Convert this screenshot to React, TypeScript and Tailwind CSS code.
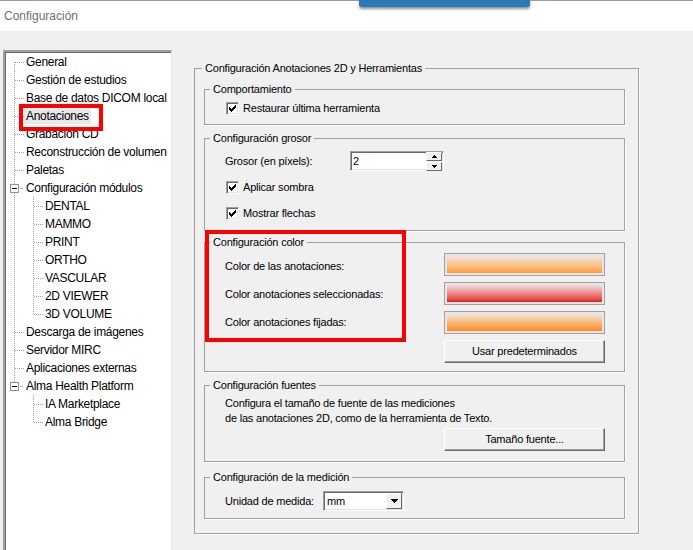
import React from 'react';

const DOT = '#a0a0a0';

function hDots(x1: number, x2: number, y: number, k: string) {
  const r: React.ReactElement[] = [];
  for (let x = x1; x <= x2; x += 2) r.push(<rect key={k + 'h' + x} x={x} y={y} width={1} height={1} fill={DOT} />);
  return r;
}
function vDots(x: number, y1: number, y2: number, k: string) {
  const r: React.ReactElement[] = [];
  for (let y = y1; y <= y2; y += 2) r.push(<rect key={k + 'v' + y} x={x} y={y} width={1} height={1} fill={DOT} />);
  return r;
}

type Row = {
  t: string;
  lvl: 0 | 1;
  first?: boolean;
  exp?: boolean;
  lastRoot?: boolean;
  lastChild?: boolean;
  rootCont?: boolean;
  sel?: boolean;
};

const rows: Row[] = [
  { t: 'General', lvl: 0, first: true },
  { t: 'Gestión de estudios', lvl: 0 },
  { t: 'Base de datos DICOM local', lvl: 0 },
  { t: 'Anotaciones', lvl: 0, sel: true },
  { t: 'Grabación CD', lvl: 0 },
  { t: 'Reconstrucción de volumen', lvl: 0 },
  { t: 'Paletas', lvl: 0 },
  { t: 'Configuración módulos', lvl: 0, exp: true },
  { t: 'DENTAL', lvl: 1, rootCont: true },
  { t: 'MAMMO', lvl: 1, rootCont: true },
  { t: 'PRINT', lvl: 1, rootCont: true },
  { t: 'ORTHO', lvl: 1, rootCont: true },
  { t: 'VASCULAR', lvl: 1, rootCont: true },
  { t: '2D VIEWER', lvl: 1, rootCont: true },
  { t: '3D VOLUME', lvl: 1, rootCont: true, lastChild: true },
  { t: 'Descarga de imágenes', lvl: 0 },
  { t: 'Servidor MIRC', lvl: 0 },
  { t: 'Aplicaciones externas', lvl: 0 },
  { t: 'Alma Health Platform', lvl: 0, exp: true, lastRoot: true },
  { t: 'IA Marketplace', lvl: 1 },
  { t: 'Alma Bridge', lvl: 1, lastChild: true },
];

function TreeLines({ r, i }: { r: Row; i: number }) {
  const k = 'r' + i;
  const L = 9;
  const w = r.lvl === 0 ? 19 : 38;
  const els: React.ReactElement[] = [];
  if (r.lvl === 0) {
    if (r.exp) {
      if (!r.first) els.push(...vDots(L, 0, 4, k + 'a'));
      if (!r.lastRoot) els.push(...vDots(L, 14, 17, k + 'b'));
      els.push(...hDots(15, 18, 9, k));
      els.push(<rect key={k + 'box'} x={5.5} y={5.5} width={8} height={8} fill="#fff" stroke="#919191" strokeWidth={1} />);
      els.push(<rect key={k + 'min'} x={7} y={9} width={5} height={1} fill="#000" />);
    } else {
      els.push(...vDots(L, r.first ? 9 : 0, r.lastRoot ? 9 : 17, k));
      els.push(...hDots(L + 1, 18, 9, k));
    }
  } else {
    if (r.rootCont) els.push(...vDots(L, 0, 17, k + 'root'));
    els.push(...vDots(28, 0, r.lastChild ? 9 : 17, k + 'c'));
    els.push(...hDots(29, 37, 9, k + 'c'));
  }
  return (
    <svg width={w} height={18} className="shrink-0" shapeRendering="crispEdges">
      {els}
    </svg>
  );
}

function Checkbox({ label }: { label: string }) {
  const starts = [5, 6, 7, 6, 5, 4, 3];
  return (
    <div className="flex items-center h-[13px] ml-[21px] gap-[4px]">
      <div className="w-[13px] h-[13px] shrink-0 bg-white border border-t-[#a0a0a0] border-l-[#a0a0a0] border-b-white border-r-white shadow-[inset_1px_1px_0_#696969,inset_-1px_-1px_0_#e3e3e3]">
        <svg width={11} height={11} className="block" shapeRendering="crispEdges">
          {starts.map((s, i) => (
            <rect key={i} x={i + 2} y={s - 1} width={1} height={3} fill="#000" />
          ))}
        </svg>
      </div>
      <span className="text-[11px] leading-[13px] text-black whitespace-nowrap">{label}</span>
    </div>
  );
}

function Btn({ label, w }: { label: string; w: string }) {
  return (
    <div
      className={`${w} h-[23px] flex items-center justify-center bg-[#f0f0f0] border border-t-white border-l-white border-b-[#696969] border-r-[#696969] shadow-[inset_-1px_-1px_0_#a0a0a0] text-[11px] text-black whitespace-nowrap`}
    >
      {label}
    </div>
  );
}

function Swatch({ g }: { g: string }) {
  return (
    <div className="w-[161px] h-[23px] border border-[#a0a0a0] bg-[#e6e6e6] p-[2px]">
      <div className={`h-full ${g}`} />
    </div>
  );
}

function SmallBtn({ down }: { down?: boolean }) {
  return (
    <div className="w-[16px] h-[9px] bg-[#f0f0f0] border border-t-white border-l-white border-b-[#696969] border-r-[#696969] flex items-center justify-center">
      <svg width={5} height={3} className="block" shapeRendering="crispEdges">
        {down ? (
          <>
            <rect x={0} y={0} width={5} height={1} fill="#000" />
            <rect x={1} y={1} width={3} height={1} fill="#000" />
            <rect x={2} y={2} width={1} height={1} fill="#000" />
          </>
        ) : (
          <>
            <rect x={2} y={0} width={1} height={1} fill="#000" />
            <rect x={1} y={1} width={3} height={1} fill="#000" />
            <rect x={0} y={2} width={5} height={1} fill="#000" />
          </>
        )}
      </svg>
    </div>
  );
}

const sunken =
  'bg-white border border-t-[#a0a0a0] border-l-[#a0a0a0] border-b-white border-r-white shadow-[inset_1px_1px_0_#696969,inset_-1px_-1px_0_#e3e3e3]';

export default function App() {
  return (
    <div className="w-[693px] h-[550px] bg-[#f0f0f0] overflow-hidden relative font-['Liberation_Sans',Arial,sans-serif] text-black">
      <div className="h-px bg-[#9c9c9c]" />
      <div className="h-[30px] bg-white flex items-center pl-[4px] text-[12px] text-[#707070]">Configuración</div>
      <div className="absolute left-[359px] top-0 w-[171px] h-[7px] bg-[#2b79b5] rounded-b-[3px] shadow-[0_2px_3px_rgba(0,0,0,0.45)]" />

      <div className="flex">
        {/* Tree panel */}
        <div className="ml-[3px] mt-[19px] w-[169px] h-[520px] bg-white border-t-2 border-l-2 border-r border-t-[#a0a0a0] border-l-[#a0a0a0] border-r-[#e3e3e3] shadow-[inset_1px_1px_0_#696969] overflow-hidden shrink-0">
          <div className="flex flex-col pt-[1px]">
            {rows.map((r, i) => (
              <div key={i} className="flex items-center h-[18px] whitespace-nowrap">
                <TreeLines r={r} i={i} />
                <span className={`px-[2px] text-[12px] leading-[15px] tracking-[-0.3px] ${r.sel ? 'bg-[#e8e8e8]' : ''}`}>{r.t}</span>
              </div>
            ))}
          </div>
        </div>

        {/* Right content */}
        <fieldset className="ml-[22px] mt-[31px] w-[445px] h-[472px] border border-[#a0a0a0] shadow-[1px_1px_0_#fff] p-0 m-0 min-w-0 tracking-[-0.2px]">
          <legend className="ml-[7px] px-[3px] text-[11px] leading-[13px]">Configuración Anotaciones 2D y Herramientas</legend>

          <fieldset className="ml-[9px] mt-[8px] w-[421px] h-[42px] border border-[#a0a0a0] shadow-[1px_1px_0_#fff] p-0 m-0 min-w-0">
            <legend className="ml-[5px] px-[3px] text-[11px] leading-[13px]">Comportamiento</legend>
            <div className="mt-[6px]">
              <Checkbox label="Restaurar última herramienta" />
            </div>
          </fieldset>

          <fieldset className="ml-[9px] mt-[7px] w-[421px] h-[99px] border border-[#a0a0a0] shadow-[1px_1px_0_#fff] p-0 m-0 min-w-0">
            <legend className="ml-[5px] px-[3px] text-[11px] leading-[13px]">Configuración grosor</legend>
            <div className="mt-[6px] flex items-center ml-[20px]">
              <span className="w-[125px] text-[11px] leading-[13px]">Grosor (en píxels):</span>
              <div className={`w-[94px] h-[20px] ${sunken} flex items-center justify-between pl-[2px] pr-[1px]`}>
                <span className="text-[11px] leading-[13px]">2</span>
                <div className="flex flex-col gap-[1px]">
                  <SmallBtn />
                  <SmallBtn down />
                </div>
              </div>
            </div>
            <div className="mt-[10px]">
              <Checkbox label="Aplicar sombra" />
            </div>
            <div className="mt-[13px]">
              <Checkbox label="Mostrar flechas" />
            </div>
          </fieldset>

          <fieldset className="ml-[9px] mt-[5px] w-[421px] h-[136px] border border-[#a0a0a0] shadow-[1px_1px_0_#fff] p-0 m-0 min-w-0">
            <legend className="ml-[5px] px-[3px] text-[11px] leading-[13px]">Configuración color</legend>
            <div className="mt-[4px] flex flex-col gap-[6px]">
              <div className="flex items-center pl-[20px]">
                <span className="w-[219px] text-[11px] leading-[13px] pt-[3px]">Color de las anotaciones:</span>
                <Swatch g="bg-linear-to-b from-[#efe6e0] via-[#f9c38c] to-[#ff9d33]" />
              </div>
              <div className="flex items-center pl-[20px]">
                <span className="w-[219px] text-[11px] leading-[13px] pt-[2px]">Color anotaciones seleccionadas:</span>
                <Swatch g="bg-linear-to-b from-[#eedede] via-[#e9868a] to-[#e0141c]" />
              </div>
              <div className="flex items-center pl-[20px]">
                <span className="w-[219px] text-[11px] leading-[13px]">Color anotaciones fijadas:</span>
                <Swatch g="bg-linear-to-b from-[#f0e4da] via-[#f8b877] to-[#ff8a17]" />
              </div>
              <div className="pl-[239px]">
                <Btn label="Usar predeterminados" w="w-[161px]" />
              </div>
            </div>
          </fieldset>

          <fieldset className="ml-[9px] mt-[7px] w-[421px] h-[83px] border border-[#a0a0a0] shadow-[1px_1px_0_#fff] p-0 m-0 min-w-0">
            <legend className="ml-[5px] px-[3px] text-[11px] leading-[13px]">Configuración fuentes</legend>
            <div className="mt-[4px] ml-[20px] text-[11px] leading-[15px]">
              <div>Configura el tamaño de fuente de las mediciones</div>
              <div>de las anotaciones 2D, como de la herramienta de Texto.</div>
            </div>
            <div className="mt-[2px] ml-[239px]">
              <Btn label="Tamaño fuente..." w="w-[161px]" />
            </div>
          </fieldset>

          <fieldset className="ml-[9px] mt-[9px] w-[421px] h-[48px] border border-[#a0a0a0] shadow-[1px_1px_0_#fff] p-0 m-0 min-w-0">
            <legend className="ml-[5px] px-[3px] text-[11px] leading-[13px]">Configuración de la medición</legend>
            <div className="mt-[7px] flex items-center ml-[20px]">
              <span className="w-[98px] text-[11px] leading-[13px]">Unidad de medida:</span>
              <div className={`w-[81px] h-[20px] ${sunken} flex items-center justify-between pl-[3px] pr-[1px]`}>
                <span className="text-[11px] leading-[13px]">mm</span>
                <div className="w-[16px] h-[16px] bg-[#f0f0f0] border border-t-white border-l-white border-b-[#696969] border-r-[#696969] flex items-center justify-center">
                  <svg width={7} height={4} className="block" shapeRendering="crispEdges">
                    <rect x={0} y={0} width={7} height={1} fill="#000" />
                    <rect x={1} y={1} width={5} height={1} fill="#000" />
                    <rect x={2} y={2} width={3} height={1} fill="#000" />
                    <rect x={3} y={3} width={1} height={1} fill="#000" />
                  </svg>
                </div>
              </div>
            </div>
          </fieldset>
        </fieldset>
      </div>

      {/* Red annotation boxes */}
      <div className="absolute left-[19px] top-[104px] w-[84px] h-[27px] border-[4px] border-[#ff0000]" />
      <div className="absolute left-[205px] top-[230px] w-[201px] h-[112px] border-[4px] border-[#ff0000]" />
    </div>
  );
}
